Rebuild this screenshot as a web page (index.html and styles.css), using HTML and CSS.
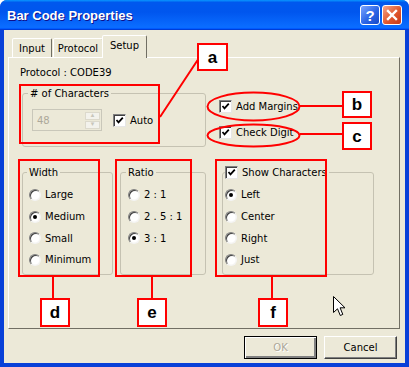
FILE: index.html
```html
<!DOCTYPE html>
<html lang="en">
<head>
    <meta charset="UTF-8">
    <title>Bar Code Properties</title>
    <link rel="stylesheet" href="styles.css">
</head>
<body>
<div class="window">
    <div class="titlebar">
        <span class="title">Bar Code Properties</span>
        <div class="title-buttons">
            <span class="tbtn help">?</span>
            <span class="tbtn close">
                <svg width="12" height="12" viewBox="0 0 12 12"><path d="M2 2 L10 10 M10 2 L2 10" stroke="#fff" stroke-width="2.4" stroke-linecap="square"/></svg>
            </span>
        </div>
    </div>

    <div class="frame">
        <div class="tabs">
            <span class="tab tab-input">Input</span>
            <span class="tab tab-protocol">Protocol</span>
            <span class="tab tab-setup active">Setup</span>
        </div>

        <div class="panel">
            <div class="protocol">Protocol : CODE39</div>

            <div class="top-row">
                <fieldset class="group chars">
                    <legend># of Characters</legend>
                    <div class="spin">
                        <span class="spin-value">48</span>
                        <span class="spin-btns">
                            <span class="spin-btn">&#9652;</span>
                            <span class="spin-btn">&#9662;</span>
                        </span>
                    </div>
                    <div class="check auto"><span class="box checked"></span>Auto</div>
                </fieldset>
                <div class="options">
                    <div class="check"><span class="box checked"></span>Add Margins</div>
                    <div class="check"><span class="box checked"></span>Check Digit</div>
                </div>
            </div>

            <div class="bottom-row">
                <fieldset class="group width-group">
                    <legend>Width</legend>
                    <div class="radio"><span class="dot"></span>Large</div>
                    <div class="radio"><span class="dot on"></span>Medium</div>
                    <div class="radio"><span class="dot"></span>Small</div>
                    <div class="radio"><span class="dot"></span>Minimum</div>
                </fieldset>
                <fieldset class="group ratio-group">
                    <legend>Ratio</legend>
                    <div class="radio"><span class="dot"></span>2 : 1</div>
                    <div class="radio"><span class="dot"></span>2 . 5 : 1</div>
                    <div class="radio"><span class="dot on"></span>3 : 1</div>
                </fieldset>
                <fieldset class="group show-group">
                    <legend><span class="check"><span class="box checked"></span>Show Characters</span></legend>
                    <div class="radio"><span class="dot on"></span>Left</div>
                    <div class="radio"><span class="dot"></span>Center</div>
                    <div class="radio"><span class="dot"></span>Right</div>
                    <div class="radio"><span class="dot"></span>Just</div>
                </fieldset>
            </div>
        </div>

        <div class="buttons">
            <span class="btn default disabled">OK</span>
            <span class="btn">Cancel</span>
        </div>
    </div>

    <!-- red call-outs drawn over the dialog -->
    <svg class="marks" width="409" height="367" viewBox="0 0 409 367">
        <g fill="none" stroke="#f00" stroke-width="2">
            <ellipse cx="124" cy="47" rx="21.5" ry="8.5"/>
            <ellipse cx="253.5" cy="106.5" rx="46" ry="14"/>
            <ellipse cx="253.5" cy="135.5" rx="46" ry="11"/>
            <rect x="20" y="85" width="139" height="58"/>
            <rect x="19" y="160" width="80" height="116"/>
            <rect x="116" y="160" width="75" height="116"/>
            <rect x="216" y="160" width="110" height="116"/>
            <path d="M199 58 L160 117 M300 106 L343 106 M300 134 L343 134 M53 277 L53 299 M152 277 L152 299 M272 277 L272 299"/>
        </g>
        <g fill="#fff" stroke="#f00" stroke-width="2">
            <rect x="198" y="44" width="29" height="26"/>
            <rect x="343" y="92" width="28" height="25"/>
            <rect x="343" y="123" width="28" height="26"/>
            <rect x="41" y="299" width="28" height="27"/>
            <rect x="138" y="299" width="28" height="27"/>
            <rect x="259" y="299" width="28" height="27"/>
        </g>
        <g class="mark-letters" text-anchor="middle">
            <text x="212.5" y="63">a</text>
            <text x="357" y="110">b</text>
            <text x="357" y="142">c</text>
            <text x="55" y="318">d</text>
            <text x="152" y="318">e</text>
            <text x="273" y="318">f</text>
        </g>
    </svg>

    <svg class="cursor" width="13" height="21" viewBox="0 0 13 21">
        <path d="M0.5 0.5 L0.5 16.5 L4.5 12.8 L7.3 19.5 L9.8 18.4 L7.1 11.8 L12 11.8 Z" fill="#fff" stroke="#000" stroke-width="1"/>
    </svg>
</div>
</body>
</html>
```

FILE: styles.css
```css
* {
    box-sizing: border-box;
}
body {
    margin: 0;
    font: 10px "DejaVu Sans", Tahoma, sans-serif;
    color: #000;
    background: #fff;
}

.window {
    position: relative;
    width: 409px;
    height: 367px;
    display: flex;
    flex-direction: column;
    background: #0840d8;
    border-radius: 7px 7px 0 0;
    overflow: hidden;
}

/* title bar */
.titlebar {
    flex: none;
    height: 30px;
    display: flex;
    align-items: center;
    justify-content: space-between;
    padding: 0 7px;
    background: linear-gradient(#0997ff, #0058ee 8%, #0056ee 40%, #0a6cff 88%, #0a6cff 93%, #005bff 95%, #003dd7 96%, #003dd7);
}
.title {
    color: #fff;
    font: bold 13px "Liberation Sans", Arial, sans-serif;
    text-shadow: 1px 1px #0f1089;
}
.title-buttons {
    display: flex;
    gap: 2px;
}
.tbtn {
    width: 20px;
    height: 20px;
    border: 1px solid #fff;
    border-radius: 3px;
    display: flex;
    align-items: center;
    justify-content: center;
    color: #fff;
    font: bold 15px "Liberation Sans", Arial, sans-serif;
}
.help {
    background: linear-gradient(135deg, #7aa5ff, #2c66e6 55%, #1647c8);
}
.close {
    background: linear-gradient(135deg, #f4a58c, #e0572c 55%, #c7391a);
}

/* dialog body */
.frame {
    flex: 1;
    display: flex;
    flex-direction: column;
    margin: 0 4px 4px;
    padding: 5px 5px 4px 4px;
    background: #ece9d8;
}

.tabs {
    display: flex;
    align-items: flex-end;
    height: 22px;
    padding-left: 4px;
    position: relative;
    z-index: 1;
}
.tab {
    height: 19px;
    display: flex;
    align-items: center;
    justify-content: center;
    background: #ece9d8;
    border: 1px solid;
    border-bottom: none;
    border-color: #fff #716f64 transparent #fff;
    border-radius: 2px 2px 0 0;
}
.tab-input {
    width: 40px;
}
.tab-protocol {
    width: 50px;
    margin-left: 1px;
}
.tab-setup {
    width: 45px;
    margin-left: -1px;
}
.tab.active {
    height: 23px;
    margin-bottom: -1px;
    padding-bottom: 3px;
}

.panel {
    height: 272px;
    border: 1px solid;
    border-color: #fff #716f64 #716f64 #fff;
    padding: 8px 0 0 13px;
}
.protocol {
    margin-left: -2px;
    line-height: 13px;
}

.group {
    margin: 0;
    min-width: 0;
    border: 1px solid #c5c2b2;
    border-radius: 3px;
}
.group legend {
    padding: 0 2px;
    margin-left: -2px;
    line-height: 13px;
}

.top-row {
    display: flex;
    margin-top: 8px;
}
.chars {
    width: 184px;
    height: 60px;
    padding: 9px 0 0 9px;
    display: flex;
    align-items: flex-start;
}
.chars legend {
    margin-left: -4px;
}
.spin {
    width: 70px;
    height: 22px;
    display: flex;
    align-items: center;
    padding: 0 1px 0 4px;
    border: 1px solid #c9c7ba;
    background: #ece9d8;
    color: #aca899;
}
.spin-btns {
    margin-left: auto;
    display: flex;
    flex-direction: column;
    gap: 1px;
}
.spin-btn {
    width: 15px;
    height: 8px;
    display: flex;
    align-items: center;
    justify-content: center;
    border: 1px solid #dcd9cc;
    background: #f3f2ec;
    color: #c8c6bb;
    font-size: 7px;
    line-height: 1;
}
.auto {
    margin: 5px 0 0 11px;
}

.options {
    margin-left: 13px;
    padding-top: 13px;
    display: flex;
    flex-direction: column;
    gap: 13px;
}

.check, .radio {
    display: flex;
    align-items: center;
    gap: 4px;
    line-height: 13px;
}
.box {
    flex: none;
    width: 13px;
    height: 13px;
    border: 1px solid;
    border-color: #808080 #e6e6e6 #e6e6e6 #808080;
    box-shadow: inset 1px 1px #404040;
    background: #fff;
}
.box.checked {
    background: #fff url("data:image/svg+xml,%3Csvg xmlns='http://www.w3.org/2000/svg' width='11' height='11'%3E%3Cpath d='M2.5 5 L4.5 7.3 L8.8 2.6' fill='none' stroke='%23000' stroke-width='1.8'/%3E%3C/svg%3E") center / 11px 11px no-repeat;
}

.bottom-row {
    display: flex;
    margin-top: 19px;
}
.bottom-row .group {
    height: 109px;
    padding-top: 5px;
}
.width-group {
    width: 91px;
    padding-left: 6px;
}
.ratio-group {
    width: 86px;
    margin-left: 7px;
    padding-left: 7px;
}
.show-group {
    width: 152px;
    margin-left: 16px;
    padding-left: 2px;
}
.show-group legend {
    margin-left: 0;
    padding: 0 2px 0 0;
}
.radio {
    height: 21.7px;
}
.dot {
    flex: none;
    width: 12px;
    height: 12px;
    border-radius: 50%;
    border: 1px solid;
    border-color: #808080 #f4f4f4 #f4f4f4 #808080;
    box-shadow: inset 1px 1px #404040;
    background: radial-gradient(circle, #fff 55%, #e8e6dc);
    display: flex;
    align-items: center;
    justify-content: center;
}
.dot.on::after {
    content: "";
    width: 4px;
    height: 4px;
    border-radius: 50%;
    background: #000;
}

.buttons {
    display: flex;
    justify-content: flex-end;
    gap: 7px;
    height: 23px;
    margin-top: 7px;
    padding-right: 3px;
}
.btn {
    width: 73px;
    display: flex;
    align-items: center;
    justify-content: center;
    border: 1px solid;
    border-color: #fff #404040 #404040 #fff;
    box-shadow: inset -1px -1px #808080;
    background: #ece9d8;
}
.btn.default {
    border-color: #000;
    box-shadow: inset 1px 1px #fff, inset -2px -2px #808080;
}
.btn.disabled {
    color: #aca899;
    text-shadow: 1px 1px #fff;
}

/* call-outs and pointer lie over the dialog */
.marks {
    position: absolute;
    left: 0;
    top: 0;
    pointer-events: none;
}
.mark-letters {
    font: bold 17px "Liberation Sans", Arial, sans-serif;
    fill: #000;
}
.cursor {
    position: absolute;
    left: 333px;
    top: 296px;
}
```
